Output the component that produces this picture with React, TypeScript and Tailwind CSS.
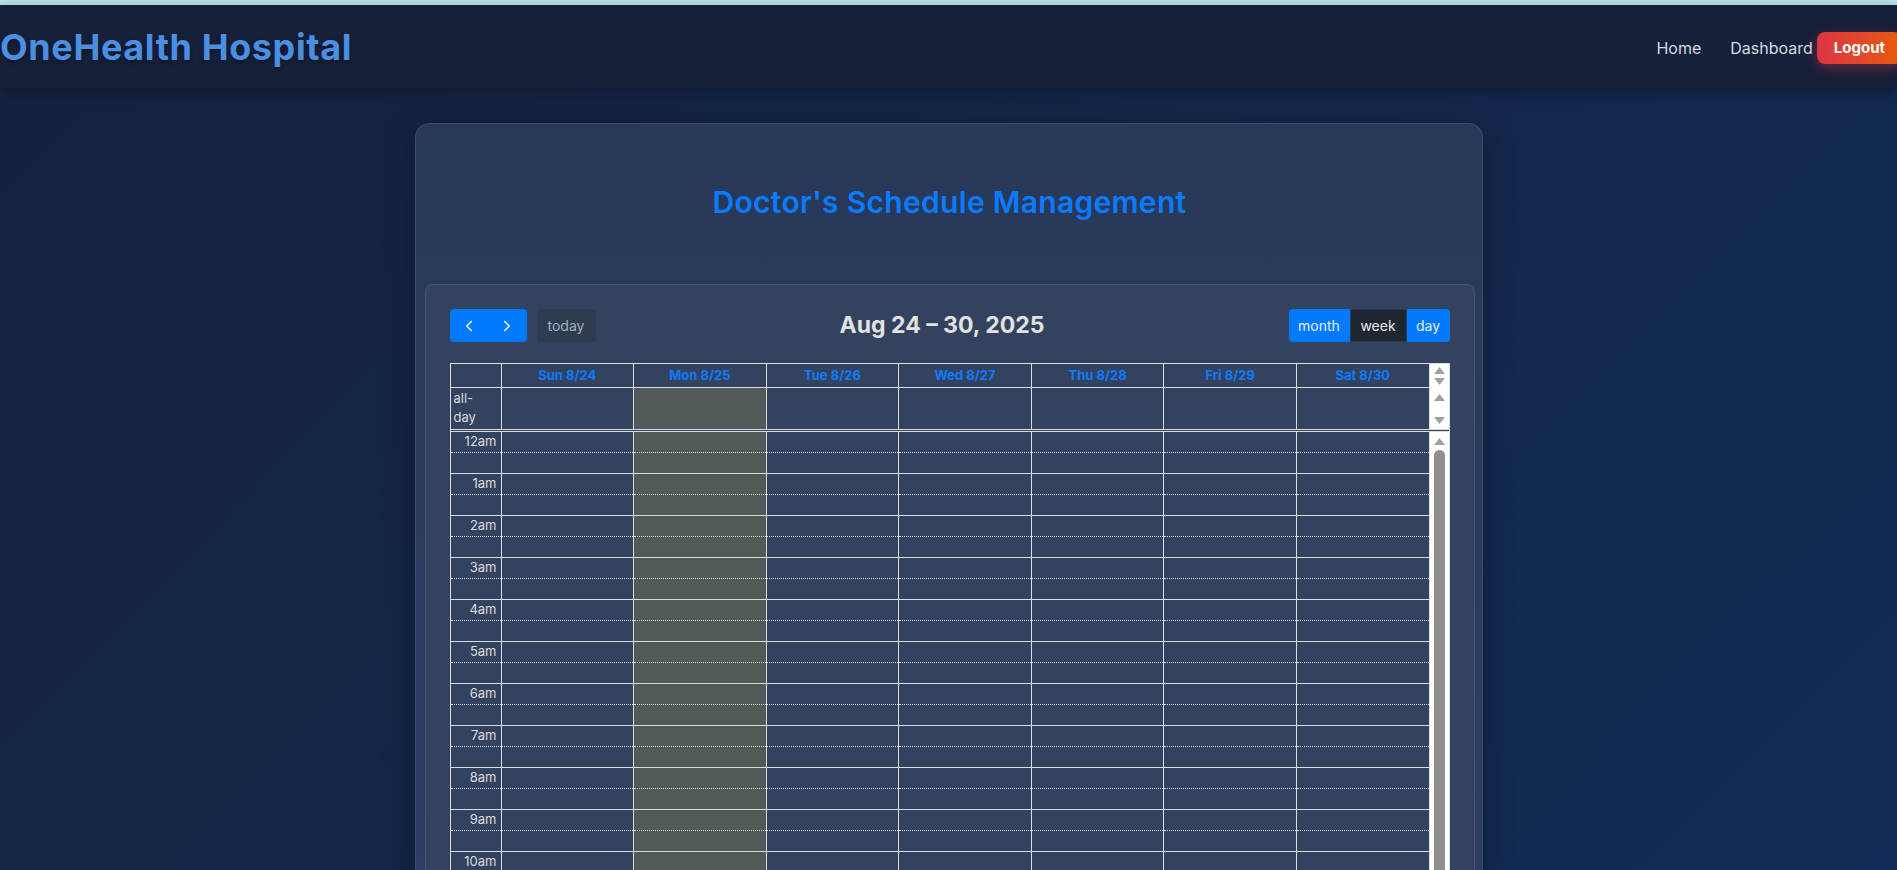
import React from "react";
import { ChevronLeft, ChevronRight } from "lucide-react";

const days = ["Sun 8/24", "Mon 8/25", "Tue 8/26", "Wed 8/27", "Thu 8/28", "Fri 8/29", "Sat 8/30"];
const hours = [
  "12am", "1am", "2am", "3am", "4am", "5am", "6am", "7am", "8am", "9am", "10am", "11am",
  "12pm", "1pm", "2pm", "3pm", "4pm", "5pm",
];
const TODAY = 1;

const Up = () => (
  <svg width="11" height="7" viewBox="0 0 11 7">
    <polygon points="5.5,0 11,7 0,7" fill="#a0a0a0" />
  </svg>
);

const Down = () => (
  <svg width="11" height="7" viewBox="0 0 11 7">
    <polygon points="0,0 11,0 5.5,7" fill="#a0a0a0" />
  </svg>
);

// one column of half-hour slots; first half of each hour gets a dotted line
const Slots = ({ labels }: { labels?: boolean }) => (
  <>
    {hours.map((h) => (
      <React.Fragment key={h}>
        <div className="h-[21px] border-b border-dotted border-[#dcdcdc] flex items-center justify-end pr-[4px] text-[13px] text-[#dcdcdc]">
          {labels ? h : null}
        </div>
        <div className="h-[21px] border-b border-[#dcdcdc]" />
      </React.Fragment>
    ))}
  </>
);

const App = () => {
  return (
    <div className="h-screen overflow-hidden bg-[linear-gradient(135deg,#16213e_0%,#112c56_100%)] font-[Inter,sans-serif]">
      <div className="h-[5px] bg-[#b8e1e6]" />

      {/* Navbar */}
      <header className="h-[83px] flex items-center justify-between bg-[#172039] shadow-[0_4px_12px_rgba(0,0,0,0.3)] relative">
        <h1 className="text-[36px] font-bold tracking-[0.6px] text-[#4a8fe1] [text-shadow:0_2px_4px_rgba(0,0,0,0.35)]">
          OneHealth Hospital
        </h1>
        <nav className="flex items-center text-[16px] text-[#d6dae2] mr-[-5px] mt-[3px]">
          <a className="mr-[29px]">Home</a>
          <a className="mr-[4px]">Dashboard</a>
          <button className="h-[32px] px-[17px] rounded-lg text-[15px] font-bold text-white bg-[linear-gradient(90deg,#dc3545,#e95a0c)] shadow-[0_4px_12px_rgba(220,53,69,0.4)]">
            Logout
          </button>
        </nav>
      </header>

      <main className="flex justify-center pt-[35px]">
        <div className="w-[1068px] rounded-[14px] border border-[#3c4b69] bg-[linear-gradient(180deg,#283859_0%,#2e4063_100%)] shadow-[0_8px_32px_rgba(0,0,0,0.3)] pl-[9px] pr-[7px] pt-[61px]">
          <h2 className="text-center text-[30px] leading-[34px] tracking-[0.3px] font-semibold text-[#0a7bff]">
            Doctor's Schedule Management
          </h2>

          <div className="mt-[65px] rounded-lg border border-[#46546f] bg-[#33435f] p-6">
            {/* Toolbar */}
            <div className="flex items-center justify-between mb-[21px] h-[33px]">
              <div className="flex items-center gap-[10px]">
                <div className="flex h-[33px] rounded bg-[#007bff] text-[#e8eef8]">
                  <button className="w-[38px] flex items-center justify-center">
                    <ChevronLeft size={18} strokeWidth={2.25} />
                  </button>
                  <button className="w-[39px] flex items-center justify-center">
                    <ChevronRight size={18} strokeWidth={2.25} />
                  </button>
                </div>
                <button className="h-[33px] w-[59px] rounded bg-[#2e3b51] text-[14px] text-[#a7afbb]">
                  today
                </button>
              </div>
              <div className="text-[23px] font-bold text-[#e2e2e2]">Aug 24 – 30, 2025</div>
              <div className="flex h-[33px] rounded bg-[#007bff] text-[14px] text-[#e8eef8] overflow-hidden">
                <button className="w-[61px]">month</button>
                <button className="w-[57px] bg-[#1e2632] border border-[#2d3a50] text-[#ececec]">week</button>
                <button className="w-[43px]">day</button>
              </div>
            </div>

            {/* Calendar grid */}
            <div className="border border-[#dcdcdc]">
              {/* header + all-day */}
              <div className="flex border-b border-[#dcdcdc]">
                <div className="flex-1 flex flex-col">
                  <div className="flex h-[24px] border-b border-[#dcdcdc]">
                    <div className="w-[50px]" />
                    {days.map((d) => (
                      <div key={d} className="flex-1 border-l border-[#dcdcdc] flex items-center justify-center text-[13px] font-bold text-[#0d7bff]">
                        {d}
                      </div>
                    ))}
                  </div>
                  <div className="flex h-[41px]">
                    <div className="w-[50px] pl-[3px] pt-[1px] text-[13px] leading-[19px] text-[#dcdcdc]">
                      all-
                      <br />
                      day
                    </div>
                    {days.map((d, i) => (
                      <div key={d} className={`flex-1 border-l border-[#dcdcdc] ${i === TODAY ? "bg-[#525a58]" : ""}`} />
                    ))}
                  </div>
                </div>
                <div className="w-[20px] border-l border-[#dcdcdc] bg-white flex flex-col items-center">
                  <div className="h-[24px] flex flex-col items-center justify-between py-[3px]">
                    <Up />
                    <Down />
                  </div>
                  <div className="h-[41px] flex flex-col items-center justify-between pt-[6px] pb-[5px]">
                    <Up />
                    <Down />
                  </div>
                </div>
              </div>

              {/* time body */}
              <div className="mt-[1px] border-t border-[#dcdcdc] flex h-[560px] overflow-hidden">
                <div className="w-[50px] shrink-0">
                  <Slots labels />
                </div>
                {days.map((d, i) => (
                  <div key={d} className={`flex-1 border-l border-[#dcdcdc] ${i === TODAY ? "bg-[#525a58]" : ""}`}>
                    <Slots />
                  </div>
                ))}
                <div className="w-[20px] shrink-0 border-l border-[#dcdcdc] bg-white flex flex-col items-center pt-[6px]">
                  <Up />
                  <div className="mt-[5px] w-[11px] flex-1 rounded-full bg-[#8f8f8f]" />
                </div>
              </div>
            </div>
          </div>
        </div>
      </main>
    </div>
  );
};

export default App;
